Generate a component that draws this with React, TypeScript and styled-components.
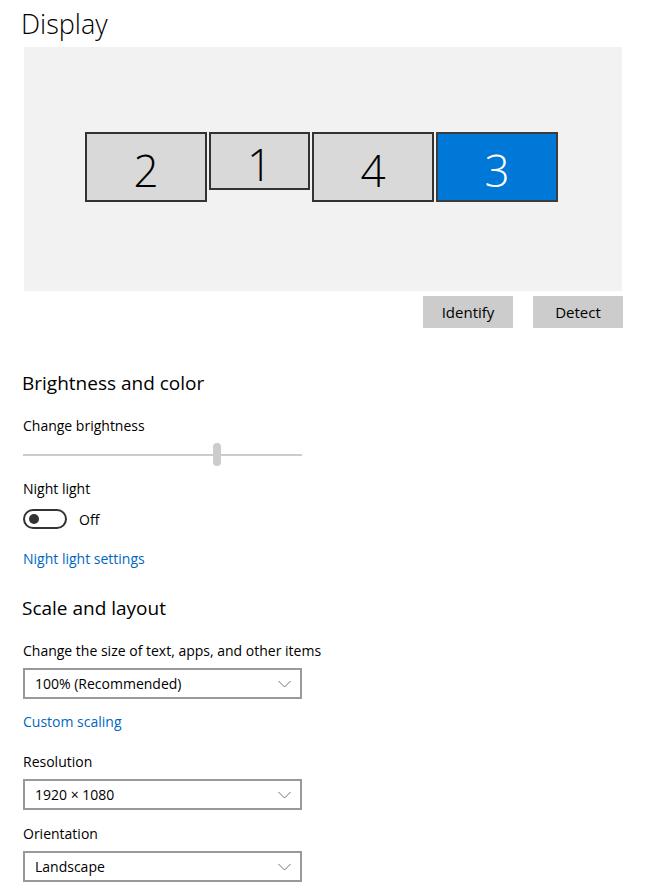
import React from 'react';
import styled, { createGlobalStyle } from 'styled-components';

const GlobalStyle = createGlobalStyle`
  html, body {
    margin: 0;
    padding: 0;
    background: #ffffff;
  }
  body {
    font-family: "Open Sans", "Noto Sans", "Liberation Sans", sans-serif;
    color: #000000;
  }
`;

const Page = styled.div`
  width: 648px;
  height: 890px;
  overflow: hidden;
  padding: 0 0 0 23px;
  box-sizing: border-box;
`;

const Title = styled.h1`
  margin: 0 0 0 -2px;
  padding: 5px 0 0 0;
  font-size: 27px;
  font-weight: 300;
  line-height: 38px;
  height: 42px;
`;

const Arrangement = styled.div`
  margin-left: 1px;
  width: 598px;
  height: 244px;
  background: #f2f2f2;
  display: flex;
  justify-content: center;
  align-items: flex-start;
  gap: 2px;
  padding: 85px 3px 0 0;
  box-sizing: border-box;
`;

const Monitor = styled.div<{ $w: number; $h: number; $active?: boolean }>`
  width: ${(p) => p.$w}px;
  height: ${(p) => p.$h}px;
  box-sizing: border-box;
  border: 2px solid ${(p) => (p.$active ? '#3c3c3c' : '#333333')};
  background: ${(p) => (p.$active ? '#0078d7' : '#d9d9d9')};
  color: ${(p) => (p.$active ? '#ffffff' : '#000000')};
  display: flex;
  align-items: center;
  justify-content: center;
  padding-top: 6px;
  font-size: 44px;
  font-weight: 300;
  line-height: 1;
`;

const ButtonRow = styled.div`
  width: 600px;
  display: flex;
  justify-content: flex-end;
  gap: 20px;
  margin-top: 5px;
`;

const Button = styled.button`
  width: 90px;
  height: 32px;
  border: none;
  background: #cccccc;
  font-family: inherit;
  font-size: 15px;
  color: #000000;
  padding: 0;
`;

const Heading = styled.h2<{ $top: number }>`
  margin: ${(p) => p.$top}px 0 0 -1px;
  font-size: 19px;
  font-weight: 400;
  line-height: 26px;
`;

const Label = styled.div<{ $top: number }>`
  margin-top: ${(p) => p.$top}px;
  font-size: 14px;
  line-height: 20px;
`;

const Slider = styled.div`
  position: relative;
  width: 279px;
  height: 24px;
  margin-top: 7px;
`;

const Track = styled.div`
  position: absolute;
  left: 0;
  right: 0;
  top: 11px;
  height: 2px;
  background: #cccccc;
`;

const Thumb = styled.div`
  position: absolute;
  left: 190px;
  top: 0;
  width: 8px;
  height: 23px;
  border-radius: 4px;
  background: #cccccc;
`;

const ToggleRow = styled.div`
  display: flex;
  align-items: center;
  gap: 12px;
  margin-top: 10px;
  font-size: 14px;
`;

const Toggle = styled.div`
  width: 44px;
  height: 20px;
  box-sizing: border-box;
  border: 2px solid #333333;
  border-radius: 10px;
  display: flex;
  align-items: center;
  padding-left: 4px;
`;

const Knob = styled.div`
  width: 10px;
  height: 10px;
  border-radius: 50%;
  background: #333333;
`;

const LinkText = styled.a<{ $top: number }>`
  display: block;
  margin-top: ${(p) => p.$top}px;
  color: #0067c0;
  font-size: 14px;
  line-height: 20px;
  text-decoration: none;
`;

const Select = styled.div`
  width: 279px;
  height: 31px;
  box-sizing: border-box;
  border: 2px solid #999999;
  margin-top: 7px;
  display: flex;
  align-items: center;
  justify-content: space-between;
  padding: 0 9px 0 10px;
  font-size: 14px;
`;

const Chevron = () => (
  <svg width="13" height="8" viewBox="0 0 13 8">
    <polyline points="0.5,1 6.5,7 12.5,1" fill="none" stroke="#707070" strokeWidth="1" />
  </svg>
);

const Dropdown = ({ value }: { value: string }) => (
  <Select>
    <span>{value}</span>
    <Chevron />
  </Select>
);

export default function App() {
  return (
    <>
      <GlobalStyle />
      <Page>
        <Title>Display</Title>
        <Arrangement>
          <Monitor $w={122} $h={70}>2</Monitor>
          <Monitor $w={101} $h={58}>1</Monitor>
          <Monitor $w={122} $h={70}>4</Monitor>
          <Monitor $w={122} $h={70} $active>3</Monitor>
        </Arrangement>
        <ButtonRow>
          <Button>Identify</Button>
          <Button>Detect</Button>
        </ButtonRow>

        <Heading $top={42}>Brightness and color</Heading>
        <Label $top={20}>Change brightness</Label>
        <Slider>
          <Track />
          <Thumb />
        </Slider>
        <Label $top={12}>Night light</Label>
        <ToggleRow>
          <Toggle>
            <Knob />
          </Toggle>
          <span>Off</span>
        </ToggleRow>
        <LinkText $top={20}>Night light settings</LinkText>

        <Heading $top={26}>Scale and layout</Heading>
        <Label $top={20}>Change the size of text, apps, and other items</Label>
        <Dropdown value="100% (Recommended)" />
        <LinkText $top={13}>Custom scaling</LinkText>
        <Label $top={20}>Resolution</Label>
        <Dropdown value="1920 × 1080" />
        <Label $top={14}>Orientation</Label>
        <Dropdown value="Landscape" />
      </Page>
    </>
  );
}
